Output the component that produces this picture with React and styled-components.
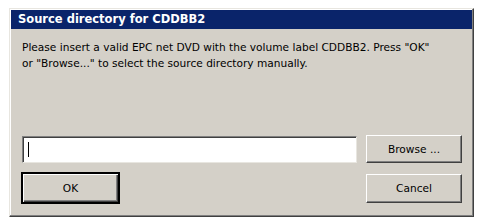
import React from "react";
import styled, { createGlobalStyle } from "styled-components";

const GlobalStyle = createGlobalStyle`
  html, body {
    margin: 0;
    padding: 0;
    background: #ffffff;
  }
  body {
    font-family: "DejaVu Sans", Tahoma, sans-serif;
  }
`;

const Page = styled.div`
  padding: 8px 0 0 9px;
`;

const Window = styled.div`
  box-sizing: border-box;
  width: 465px;
  height: 209px;
  background: #d4d0c8;
  border-top: 1px solid #e8e6e0;
  border-left: 1px solid #e8e6e0;
  border-right: 1px solid #404040;
  border-bottom: 1px solid #404040;
  box-shadow: inset -1px -1px 0 #808080, inset 1px 1px 0 #ffffff;
  padding: 1px;
  display: flex;
  flex-direction: column;
`;

const TitleBar = styled.div`
  height: 19px;
  background: #0a246a;
  color: #ffffff;
  font-weight: bold;
  font-size: 11.5px;
  line-height: 19px;
  padding-left: 7px;
`;

const Body = styled.div`
  flex: 1;
  display: flex;
  flex-direction: column;
  padding: 10px 10px 10px 10px;
`;

const Message = styled.p`
  margin: 0 0 0 1px;
  font-size: 10.6px;
  line-height: 16px;
  color: #000000;
`;

const Row = styled.div`
  display: flex;
  align-items: center;
  justify-content: space-between;
  gap: 9px;
  margin-top: ${(p) => p.$top || 0}px;
`;

const Field = styled.div`
  box-sizing: border-box;
  flex: 1;
  height: 27px;
  margin-left: 1px;
  background: #ffffff;
  border-top: 1px solid #808080;
  border-left: 1px solid #808080;
  border-right: 1px solid #e8e6e0;
  border-bottom: 1px solid #e8e6e0;
  box-shadow: inset 1px 1px 0 #404040;
  display: flex;
  align-items: center;
  padding-left: 5px;
`;

const Caret = styled.span`
  width: 1px;
  height: 15px;
  background: #000000;
`;

const Button = styled.button`
  box-sizing: border-box;
  width: ${(p) => p.$w}px;
  height: ${(p) => p.$h}px;
  margin-left: ${(p) => p.$left || 0}px;
  background: #d4d0c8;
  font-family: "DejaVu Sans", Tahoma, sans-serif;
  font-size: 10.6px;
  color: #000000;
  padding: 0;
  border-top: 1px solid #ffffff;
  border-left: 1px solid #ffffff;
  border-right: 1px solid #404040;
  border-bottom: 1px solid #404040;
  box-shadow: inset -1px -1px 0 #808080;
  outline: ${(p) => (p.$default ? "1px solid #000000" : "none")};
  outline-offset: 0;
  ${(p) =>
    p.$default &&
    `
    border-color: #000000;
    box-shadow: inset 1px 1px 0 #ffffff, inset -1px -1px 0 #404040, inset -2px -2px 0 #808080;
  `}
`;

export default function App() {
  return (
    <>
      <GlobalStyle />
      <Page>
        <Window>
          <TitleBar>Source directory for CDDBB2</TitleBar>
          <Body>
            <Message>
              Please insert a valid EPC net DVD with the volume label CDDBB2. Press "OK"
              <br />
              or "Browse..." to select the source directory manually.
            </Message>
            <Row $top={64}>
              <Field>
                <Caret />
              </Field>
              <Button $w={96} $h={28}>
                Browse ...
              </Button>
            </Row>
            <Row $top={10}>
              <Button $w={97} $h={30} $left={1} $default>
                OK
              </Button>
              <Button $w={96} $h={29}>
                Cancel
              </Button>
            </Row>
          </Body>
        </Window>
      </Page>
    </>
  );
}
